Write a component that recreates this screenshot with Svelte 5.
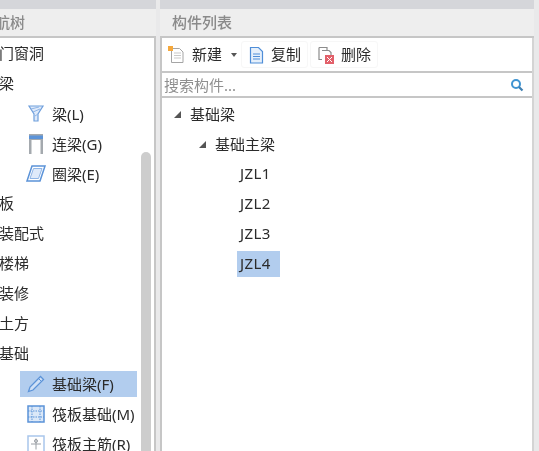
<script>
  const groups = [
    { label: '门窗洞', depth: 0 },
    { label: '梁', depth: 0 },
    { label: '梁(L)', depth: 1, icon: 'beam' },
    { label: '连梁(G)', depth: 1, icon: 'link' },
    { label: '圈梁(E)', depth: 1, icon: 'ring' },
    { label: '板', depth: 0 },
    { label: '装配式', depth: 0 },
    { label: '楼梯', depth: 0 },
    { label: '装修', depth: 0 },
    { label: '土方', depth: 0 },
    { label: '基础', depth: 0 },
    { label: '基础梁(F)', depth: 1, icon: 'pencil', selected: true },
    { label: '筏板基础(M)', depth: 1, icon: 'raft' },
    { label: '筏板主筋(R)', depth: 1, icon: 'rebar' }
  ];

  const parts = ['JZL1', 'JZL2', 'JZL3', 'JZL4'];
  let selectedPart = $state('JZL4');
</script>

<div class="app">
  <section class="nav">
    <header class="title nav__title">导航树</header>
    <div class="nav__body">
      <ul class="tree">
        {#each groups as g}
          {#if g.depth === 0}
            <li class="group">{g.label}</li>
          {:else}
            <li class="leaf" class:leaf--on={g.selected}>
              <span class="leaf__icon">
                {#if g.icon === 'beam'}
                  <svg width="18" height="20" viewBox="0 0 18 20">
                    <path d="M2 2h14l-5 8v7H7v-7z" fill="#dfeafa" stroke="#6f9fdc" stroke-width="1.2"/>
                    <path d="M4 5l8-2M6 8l7-3M8 12l3-2" stroke="#8fb5e6" fill="none"/>
                  </svg>
                {:else if g.icon === 'link'}
                  <svg width="18" height="22" viewBox="0 0 18 22">
                    <path d="M2 1h14v20h-2.500V7h-9v14H2z" fill="#a4a9ae"/>
                    <rect x="2" y="2.500" width="14" height="3.500" fill="#5b93d8"/>
                  </svg>
                {:else if g.icon === 'ring'}
                  <svg width="22" height="20" viewBox="0 0 22 20">
                    <path d="M7 2h13l-5 15H2z" fill="#fff" stroke="#5b93d8" stroke-width="1.500"/>
                    <path d="M8.500 4.500h8.500l-3.500 10H5z" fill="#dfeafa" stroke="#8fb5e6"/>
                  </svg>
                {:else if g.icon === 'pencil'}
                  <svg width="20" height="20" viewBox="0 0 20 20">
                    <path d="M14.500 2.500l3 3L7 16l-4.500 1.500L4 13z" fill="#cfe0f6" stroke="#5b93d8" stroke-width="1.300"/>
                    <path d="M12.500 4.500l3 3" stroke="#5b93d8"/>
                  </svg>
                {:else if g.icon === 'raft'}
                  <svg width="18" height="18" viewBox="0 0 18 18">
                    <rect x="1" y="1" width="16" height="16" fill="#dbe8f8" stroke="#5b93d8" stroke-width="1.500"/>
                    <path d="M5 1v16M13 1v16M1 6h16M1 12h16" stroke="#5b93d8" stroke-dasharray="1.500 1"/>
                  </svg>
                {:else}
                  <svg width="18" height="18" viewBox="0 0 18 18">
                    <rect x="1" y="1" width="16" height="16" fill="#fff" stroke="#a9c6ec" stroke-width="1.500"/>
                    <path d="M9 3.500v11M4 9h10" stroke="#9a9fa5"/>
                    <circle cx="9" cy="6" r="1.500" fill="none" stroke="#9a9fa5"/>
                  </svg>
                {/if}
              </span>
              <span class="leaf__text">{g.label}</span>
            </li>
          {/if}
        {/each}
      </ul>
      <div class="scroll"><div class="scroll__thumb"></div></div>
    </div>
  </section>

  <section class="list">
    <header class="title">构件列表</header>
    <div class="list__body">
      <div class="tools">
        <button class="tool tool--new" type="button">
          <svg width="20" height="20" viewBox="0 0 20 20">
            <path d="M4.500 3.500h8l3.500 3.500v10.500H4.500z" fill="#fff" stroke="#a5a5a5"/>
            <path d="M7 8h7M7 10.500h7M7 13h7" stroke="#c9c9c9"/>
            <rect x="1" y="1" width="5" height="5" fill="#f5a83c"/>
          </svg>
          <span class="tool__text">新建</span>
          <span class="caret"></span>
        </button>
        <button class="tool" type="button">
          <svg width="18" height="20" viewBox="0 0 18 20">
            <path d="M2.500 2.500h8l4 4v11.500h-12z" fill="#e6f0fb" stroke="#4f8ed8" stroke-width="1.200"/>
            <path d="M5 9h7M5 11.500h7M5 14h7" stroke="#4f8ed8"/>
          </svg>
          <span class="tool__text">复制</span>
        </button>
        <button class="tool" type="button">
          <svg width="19" height="20" viewBox="0 0 19 20">
            <path d="M2 2.500h8v3M2 2.500v12h3" fill="none" stroke="#8c8c8c" stroke-width="1.200"/>
            <path d="M5 5.500h7l2 2v3" fill="none" stroke="#8c8c8c" stroke-width="1.200"/>
            <rect x="8" y="10" width="9" height="9" fill="#e2606a"/>
            <path d="M10 12l5 5M15 12l-5 5" stroke="#fff"/>
          </svg>
          <span class="tool__text">删除</span>
        </button>
      </div>
      <div class="search">
        <input class="search__input" type="text" placeholder="搜索构件..." />
        <svg class="search__icon" width="14" height="14" viewBox="0 0 14 14">
          <circle cx="6" cy="6" r="4" fill="none" stroke="#3f94d2" stroke-width="2"/>
          <path d="M9 9l3.500 3.500" stroke="#3f7fb0" stroke-width="2.200"/>
        </svg>
      </div>
      <div class="parts">
        <div class="node node--root"><span class="tri"></span><span class="node__text">基础梁</span></div>
        <div class="node node--sub"><span class="tri"></span><span class="node__text">基础主梁</span></div>
        {#each parts as p}
          <div class="part-row">
            <button class="part" class:part--on={selectedPart === p} type="button" onclick={() => (selectedPart = p)}>{p}</button>
          </div>
        {/each}
      </div>
    </div>
  </section>
</div>

<style>
  :global(body) {
    margin: 0;
    background: #e9e9ea;
  }

  .app {
    display: flex;
    gap: 4px;
    width: 539px;
    height: 451px;
    overflow: hidden;
    font-family: "Noto Sans", "Noto Sans CJK SC", sans-serif;
    font-size: 15px;
    color: #2b2b2b;
    filter: blur(0.3px);
  }

  .nav {
    width: 156px;
    flex: none;
    overflow: hidden;
  }

  .list {
    width: 374px;
    flex: none;
  }

  .list__body {
    height: 413px;
    background: #fff;
    border-left: 2px solid #c6c6c6;
    border-right: 2px solid #d4d4d4;
  }

  .title {
    height: 38px;
    box-sizing: border-box;
    padding-left: 12px;
    background: #eeeeee;
    border-top: 9px solid #d5d6da;
    border-bottom: 2px solid #c6c6c6;
    color: #8a8a8a;
    line-height: 27px;
    font-weight: 500;
  }

  .nav__title {
    padding-left: 0;
    text-indent: -20px;
    white-space: nowrap;
  }

  .nav__body {
    display: flex;
    height: 413px;
    padding-top: 1px;
    background: #fff;
    border-right: 2px solid #c6c6c6;
  }

  .tree {
    list-style: none;
    margin: 0;
    padding: 0;
    width: 141px;
    flex: none;
  }

  .group {
    height: 30px;
    line-height: 28px;
    margin-left: -1px;
    white-space: nowrap;
  }

  .leaf {
    display: flex;
    align-items: center;
    height: 30px;
    box-sizing: border-box;
    padding: 2px 4px 2px 20px;
    background-clip: content-box;
    white-space: nowrap;
  }

  .leaf__text {
    margin-bottom: 2px;
  }

  .leaf--on {
    background-color: #b2cdee;
  }

  .leaf__icon {
    width: 32px;
    flex: none;
    display: flex;
    justify-content: center;
  }

  .scroll {
    width: 10px;
    flex: none;
    padding-top: 113px;
  }

  .scroll__thumb {
    height: 300px;
    background: #cdcdcd;
    border-radius: 5px 5px 0 0;
  }

  .tools {
    display: flex;
    align-items: center;
    height: 35px;
    box-sizing: border-box;
    border-bottom: 2px solid #c6c6c6;
    padding-left: 5px;
    gap: 2px;
  }

  .tool {
    display: flex;
    align-items: center;
    gap: 5px;
    height: 27px;
    padding: 0 6px;
    border: 1px solid #f7f7f7;
    border-radius: 3px;
    background: none;
    font: inherit;
    color: #2b2b2b;
  }

  .tool__text {
    margin-bottom: 2px;
  }

  .tool--new {
    padding: 0;
    border: none;
  }

  .caret {
    width: 0;
    height: 0;
    margin: 0 2px 0 4px;
    border: 3px solid transparent;
    border-top: 4px solid #555;
    border-bottom: none;
  }

  .search {
    display: flex;
    align-items: center;
    height: 25px;
    box-sizing: border-box;
    border-bottom: 2px solid #c6c6c6;
    padding: 0 8px 0 2px;
  }

  .search__input {
    flex: 1;
    min-width: 0;
    border: none;
    outline: none;
    padding: 0;
    background: none;
    font: inherit;
  }

  .search__input::placeholder {
    color: #8f8f8f;
    opacity: 1;
  }

  .parts {
    padding-top: 1px;
  }

  .node {
    display: flex;
    align-items: center;
    height: 30px;
  }

  .node__text {
    margin-bottom: 2px;
  }

  .node--root {
    padding-left: 12px;
  }

  .node--sub {
    padding-left: 37px;
  }

  .tri {
    width: 0;
    height: 0;
    margin-right: 9px;
    border-left: 7px solid transparent;
    border-bottom: 7px solid #555;
  }

  .part-row {
    height: 30px;
    display: flex;
    align-items: center;
    padding-left: 75px;
  }

  .part {
    height: 26px;
    width: 43px;
    padding: 0 0 2px 3px;
    border: none;
    background: none;
    font: inherit;
    letter-spacing: 0.4px;
    color: #2b2b2b;
    text-align: left;
  }

  .part--on {
    background: #b2cdee;
  }
</style>
